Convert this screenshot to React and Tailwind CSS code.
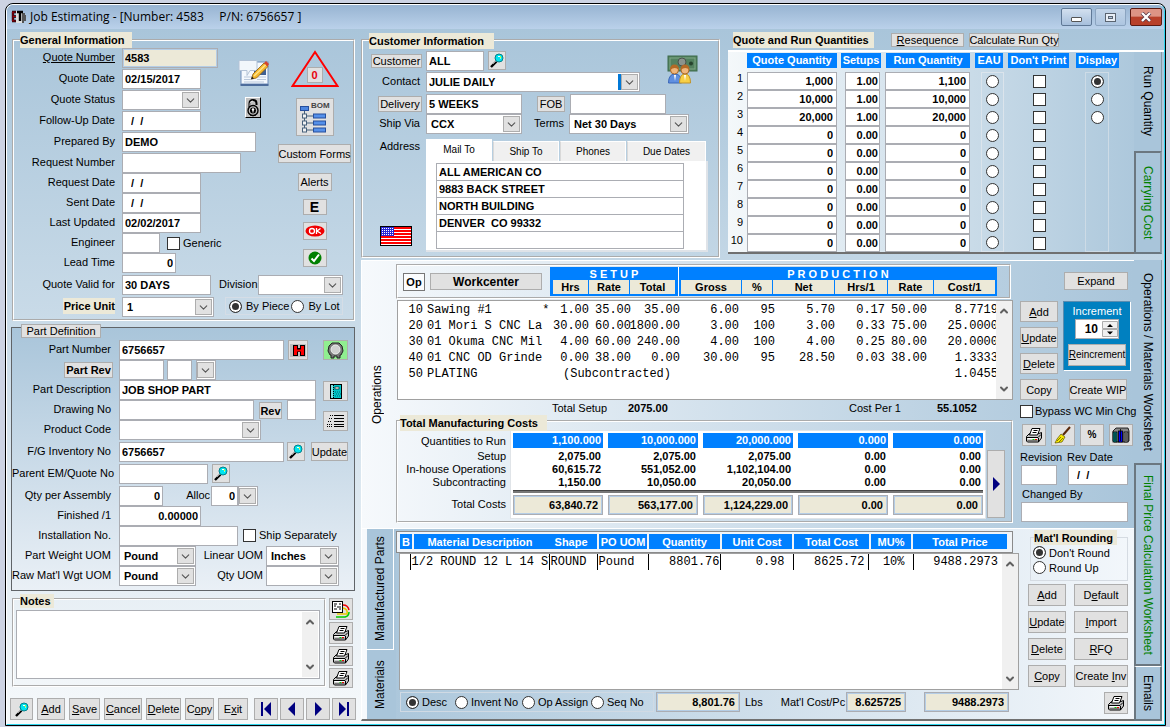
import { ChevronDown, ChevronUp } from 'lucide-react';

const quantityRows = [
    ['1,000', '1.00', '1,100'],
    ['10,000', '1.00', '10,000'],
    ['20,000', '1.00', '20,000'],
    ['0', '0.00', '0'],
    ['0', '0.00', '0'],
    ['0', '0.00', '0'],
    ['0', '0.00', '0'],
    ['0', '0.00', '0'],
    ['0', '0.00', '0'],
    ['0', '0.00', '0'],
];

const operations = [
    { op: 10, name: 'Sawing #1       *', hrs: '1.00', rate: '35.00', total: '35.00', gross: '6.00', pct: '95', net: '5.70', per: '0.17', prate: '50.00', cost: '8.7719' },
    { op: 20, name: '01 Mori S CNC La', hrs: '30.00', rate: '60.00', total: '1800.00', gross: '3.00', pct: '100', net: '3.00', per: '0.33', prate: '75.00', cost: '25.0000' },
    { op: 30, name: '01 Okuma CNC Mil', hrs: '4.00', rate: '60.00', total: '240.00', gross: '4.00', pct: '100', net: '4.00', per: '0.25', prate: '80.00', cost: '20.0000' },
    { op: 40, name: '01 CNC OD Grinde', hrs: '0.00', rate: '38.00', total: '0.00', gross: '30.00', pct: '95', net: '28.50', per: '0.03', prate: '38.00', cost: '1.3333' },
    { op: 50, name: 'PLATING', sub: '(Subcontracted)', cost: '1.0455' },
];

const costs = [
    { qty: '1,100.000', rows: ['2,075.00', '60,615.72', '1,150.00'], total: '63,840.72' },
    { qty: '10,000.000', rows: ['2,075.00', '551,052.00', '10,050.00'], total: '563,177.00' },
    { qty: '20,000.000', rows: ['2,075.00', '1,102,104.00', '20,050.00'], total: '1,124,229.00' },
    { qty: '0.000', rows: ['0.00', '0.00', '0.00'], total: '0.00' },
    { qty: '0.000', rows: ['0.00', '0.00', '0.00'], total: '0.00' },
];

// read-only totals: beige with a thin blue inner edge
const locked = 'bg-[#ece9d8] shadow-[inset_0_0_0_1px_#b4cde6]';

/* ---------- controls ---------- */

function Btn({ className = '', children, ...rest }) {
    return (
        <button
            type="button"
            className={`flex shrink-0 items-center justify-center whitespace-nowrap border border-[#adadad] bg-[#e1e1e1] ${className}`}
            {...rest}
        >
            {children}
        </button>
    );
}

function Field({ className = '', tone = 'bg-white', ...rest }) {
    return <input className={`h-5 shrink-0 border border-[#abadb3] px-[2px] font-bold outline-none ${tone} ${className}`} {...rest} />;
}

function Drop({ className = '', value = '', pad = 'pl-1', ...rest }) {
    return (
        <span className={`relative flex h-5 shrink-0 ${className}`}>
            <select className={`h-full w-full appearance-none border border-[#abadb3] bg-white font-bold outline-none ${pad}`} {...rest}>
                <option>{value}</option>
            </select>
            <span className="pointer-events-none absolute top-[2px] right-[2px] flex h-4 w-[17px] items-center justify-center border border-[#adadad] bg-[#e1e1e1]">
                <ChevronDown size={13} strokeWidth={2} color="#555" className="shrink-0" />
            </span>
        </span>
    );
}

function Radio(props) {
    return (
        <input
            type="radio"
            className="size-[13px] shrink-0 appearance-none rounded-full border border-[#333] bg-white checked:bg-[#333] checked:shadow-[inset_0_0_0_2px_#fff]"
            {...props}
        />
    );
}

function Check(props) {
    return <input type="checkbox" className="size-[13px] shrink-0 appearance-none border border-[#333] bg-white checked:bg-[#333]" {...props} />;
}

function Title({ className = '', children }) {
    return <h2 className={`whitespace-nowrap bg-[#ece9d8] leading-4 font-bold ${className}`}>{children}</h2>;
}

function Row({ label, id, h = 'h-5', col = 'mr-[7px] w-[101px]', children }) {
    return (
        <div className={`flex shrink-0 items-start ${h}`}>
            <label htmlFor={id} className={`shrink-0 text-right leading-[18px] whitespace-nowrap ${col}`}>{label}</label>
            {children}
        </div>
    );
}

function ScrollBar() {
    return (
        <div className="flex w-4 shrink-0 flex-col items-center justify-between bg-[#f0f0f0] py-1">
            <ChevronUp size={12} strokeWidth={4} color="#606060" />
            <ChevronDown size={12} strokeWidth={4} color="#606060" />
        </div>
    );
}

function SideTab({ className = '', children }) {
    return (
        <button type="button" className={`flex w-7 items-center justify-center text-[12px] [writing-mode:vertical-rl] ${className}`}>
            {children}
        </button>
    );
}

/* ---------- icons ---------- */

function Magnifier() {
    return (
        <svg width="14" height="15" viewBox="0 0 14 15">
            <path d="M1 14 L6.500 8.500" stroke="#000" strokeWidth="2.400" />
            <path d="M3 11 L6 8" stroke="#999" strokeWidth="1" />
            <circle cx="9" cy="5" r="4" fill="#00e5ee" stroke="#067f8c" />
            <path d="M8 3.500h2M10.500 4v1.500" stroke="#fff" />
            <path d="M10.500 3.500v1.500" stroke="#ff0" />
        </svg>
    );
}

function Printer() {
    return (
        <svg width="18" height="17" viewBox="0 0 18 17">
            <path d="M1.500 9.500L4.500 6.500H14L16.500 5.500V11L13.500 15H2.500L1.500 14Z" fill="#c8c8c8" stroke="#000" />
            <path d="M4.500 8L7 1.500H15L12.500 8Z" fill="#fff" stroke="#000" />
            <path d="M8.500 3.500h4M7.500 5.500h4" stroke="#000" />
            <path d="M1.500 10.500H13L16 7.500M13.500 11V15" stroke="#000" fill="none" />
            <path d="M2.500 11.500h10" stroke="#fff" />
            <path d="M2.500 13.500h10" stroke="#777" />
            <path d="M7.500 12.500h2" stroke="#0c0" />
            <path d="M10 12.500h2" stroke="#e00" />
        </svg>
    );
}

function AppIcon() {
    return (
        <svg width="15" height="14" viewBox="0 0 15 14">
            <path d="M11 3h3v2h1v6h-2v2h-2z" fill="#555" />
            <rect x="5" y="1" width="6" height="12" fill="#ddd" />
            <path d="M1 2h4M2 2v9M1 11h4M2 6.500h3M6 2h6M9 2v9" stroke="#000" strokeWidth="2.400" fill="none" />
            <path d="M1 2h4M2 2v9M1 11h4M2 6.500h3" stroke="#a00010" strokeWidth="1.200" fill="none" />
        </svg>
    );
}

function MemoIcon() {
    return (
        <svg width="31" height="28" viewBox="0 0 31 28">
            <rect x="3" y="3" width="27" height="22" fill="#f4f8fd" stroke="#6f8cb8" />
            <path d="M2.500 26h28" stroke="#4d6c9c" strokeWidth="2" />
            <rect x="16" y="10" width="12" height="6" fill="#3f5f92" />
            <path d="M6 18h8M6 20.500h7M6 23h20M20 18h8M19 20.500h9" stroke="#b9c7db" />
            <path d="M2 1.500h16q1 0 1 1v8q0 1-1 1h-6l-3 5v-5H2q-1 0-1-1v-8q0-1 1-1z" fill="#f2f6fb" stroke="#b3c2d6" />
            <path d="M13.500 20l1.500-5L26 4l4 3.500L18.500 19z" fill="#f5b92e" stroke="#8a5a10" strokeWidth=".8" />
            <path d="M16 17L28 5.500" stroke="#ffe48a" strokeWidth="1.400" />
            <path d="M26 4l2-2 3 3-1.500 2.500z" fill="#d6452c" />
            <path d="M13 20.500l1-3 2 2z" fill="#222" />
        </svg>
    );
}

function LockIcon() {
    return (
        <svg width="14" height="19" viewBox="0 0 14 19">
            <path d="M3.500 9V5.500Q3.500 2 7 2T10.500 5.500V7" stroke="#000" strokeWidth="2" fill="none" />
            <path d="M4 8V5.500Q4 3 7 3" stroke="#fff" strokeWidth=".8" fill="none" />
            <circle cx="7" cy="12.500" r="5" fill="#c0c0c0" stroke="#000" strokeWidth="1.400" />
            <circle cx="7" cy="12.500" r="3" fill="#000" />
            <circle cx="7" cy="11.500" r="1.200" fill="#fff" />
            <path d="M7 12v2.500" stroke="#fff" />
            <path d="M4 17q3 1.500 6 0" stroke="#000" fill="none" />
        </svg>
    );
}

function BomIcon() {
    return (
        <svg width="34" height="35" viewBox="0 0 34 35">
            <text x="13" y="8" fontSize="8" fontWeight="bold" fill="#444" fontFamily="Liberation Sans, sans-serif">BOM</text>
            <rect x="2.500" y="6.500" width="8" height="4" fill="#4d86e0" stroke="#274f9c" />
            <path d="M6.500 11V30M7 16h9M7 23h9M7 30h9" stroke="#47607a" />
            {[16, 23, 30].map((y) => (
                <g key={y}>
                    <rect x="4.500" y={y - 2} width="4" height="4" fill="#f2f2f2" stroke="#47607a" />
                    <rect x="15.500" y={y - 2} width="12" height="4" fill="#5590ea" stroke="#274f9c" />
                </g>
            ))}
        </svg>
    );
}

function CustomerIcon() {
    return (
        <svg width="31" height="30" viewBox="0 0 31 30">
            <rect x="1" y="1" width="29" height="15" fill="#53815f" stroke="#3d6b4a" />
            <rect x="3" y="3" width="25" height="11" fill="none" stroke="#7fa786" />
            <circle cx="15" cy="7" r="4" fill="#8b938c" stroke="#4a524c" />
            <circle cx="24" cy="8.500" r="2" fill="#27442e" />
            <path d="M1.500 28q0-9 6.500-9t6.500 9z" fill="#5f8fe0" stroke="#3a66b8" />
            <path d="M12.500 28q0-9 5.500-9t5.500 9z" fill="#f7cf45" stroke="#c0922a" />
            <circle cx="7.500" cy="15" r="4" fill="#f0b67c" stroke="#a96a2c" />
            <circle cx="18" cy="15" r="4" fill="#f0b67c" stroke="#a96a2c" />
            <path d="M3 15q0-5.500 4.500-5.500t4.500 5.500q-4-4-9 0zM13.500 15q0-5.500 4.500-5.500t4.500 5.500q-4-4-9 0z" fill="#b46a26" />
            <path d="M7 20l1 6 1-6zM17 20l1 6 1-6z" fill="#fff" />
        </svg>
    );
}

function FlagIcon() {
    return (
        <svg width="32" height="20" viewBox="0 0 32 20">
            <rect width="32" height="20" fill="#fff" />
            {[1, 4, 7, 10, 13, 16].map((y) => (
                <rect key={y} x="1" y={y} width="30" height="2" fill="#f00" />
            ))}
            <rect x="1" y="1" width="13" height="9" fill="#2a2ad8" />
            {[2, 4, 6, 8].map((y) => (
                <path key={y} d={`M2 ${y}.5h12`} stroke="#fff" strokeDasharray="1 1" />
            ))}
            <rect x=".5" y=".5" width="31" height="19" fill="none" stroke="#000" />
        </svg>
    );
}

function NavArrow({ dir, bar }) {
    return (
        <svg width="12" height="14" viewBox="0 0 12 14" fill="#000080" className={dir === 'left' ? '-scale-x-100' : ''}>
            <path d={bar ? 'M1 0v14l7-7z' : 'M3 0v14l7-7z'} />
            {bar && <rect x="9" width="2" height="14" />}
        </svg>
    );
}

/* ---------- left column ---------- */

function GeneralInformation() {
    return (
        <section className="mt-[10px] ml-[5px] border-2 border-white [border-style:groove]">
            <Title className="-mt-[9px] ml-[6px] w-28">General Information</Title>
            <div className="flex">
                <div className="w-[216px] shrink-0">
                    <Row label={<span className="underline">Quote Number</span>} id="quoteNo" h="h-[21px]"><Field id="quoteNo" className="w-24" tone={locked} defaultValue="4583" /></Row>
                    <Row label="Quote Date" id="quoteDate" h="h-[21px]"><Field id="quoteDate" className="w-[79px]" defaultValue="02/15/2017" /></Row>
                    <Row label="Quote Status" id="status" h="h-[21px]"><Drop id="status" className="w-[79px]" /></Row>
                    <Row label="Follow-Up Date" id="followUp" h="h-[21px]"><Field id="followUp" className="w-[79px] pl-2" defaultValue="/  /" /></Row>
                    <Row label="Prepared By" id="prepared" h="h-[21px]"><Field id="prepared" className="w-[134px]" defaultValue="DEMO" /></Row>
                    <Row label="Request Number" id="reqNo"><Field id="reqNo" className="w-[119px]" /></Row>
                    <Row label="Request Date" id="reqDate"><Field id="reqDate" className="w-[79px] pl-2" defaultValue="/  /" /></Row>
                    <Row label="Sent Date" id="sentDate"><Field id="sentDate" className="w-[79px] pl-2" defaultValue="/  /" /></Row>
                    <Row label="Last Updated" id="updated"><Field id="updated" className="w-[79px]" defaultValue="02/02/2017" /></Row>
                    <Row label="Engineer" id="engineer">
                        <Field id="engineer" className="w-[38px]" />
                        <label className="ml-[7px] flex h-5 items-center gap-[3px]"><Check />Generic</label>
                    </Row>
                    <Row label="Lead Time" id="lead" h="h-[22px]"><Field id="lead" className="w-[54px] text-right" defaultValue="0" /></Row>
                </div>
                <div className="flex w-[46px] shrink-0 flex-col items-center gap-[10px] pt-[11px]">
                    <button type="button" aria-label="Memo"><MemoIcon /></button>
                    <button type="button" aria-label="Lock" className="flex h-[21px] w-4 items-center justify-center border border-white border-r-black border-b-black bg-[#c0c0c0]"><LockIcon /></button>
                </div>
                <div className="flex flex-1 flex-col items-center pt-[2px]">
                    <div className="relative">
                        <svg width="48" height="38" viewBox="0 0 48 38" className="block"><path d="M24 2L46.500 36H1.500Z" fill="none" stroke="#f00" strokeWidth="2" /></svg>
                        <Btn className="absolute top-[17px] left-4 h-4 w-4 font-bold text-red-600">0</Btn>
                    </div>
                    <Btn className="mt-[10px] h-[38px] w-[38px]" aria-label="BOM"><BomIcon /></Btn>
                    <Btn className="mt-2 h-[19px] w-[73px]">Custom Forms</Btn>
                    <Btn className="mt-[10px] h-[18px] w-[34px]">Alerts</Btn>
                    <Btn className="mt-2 h-4 w-6 text-[14px] font-bold">E</Btn>
                    <Btn className="mt-[7px] h-[18px] w-6" aria-label="OK">
                        <svg width="20" height="12" viewBox="0 0 20 12">
                            <ellipse cx="10" cy="6" rx="9.500" ry="5.500" fill="#f00000" />
                            <ellipse cx="7" cy="6" rx="2.500" ry="2.500" fill="none" stroke="#fff" strokeWidth="1.300" />
                            <path d="M11.500 3v6M15.500 3.500L12 6l4 2.500" stroke="#fff" strokeWidth="1.300" fill="none" />
                        </svg>
                    </Btn>
                    <Btn className="mt-[9px] h-[18px] w-6" aria-label="Approve">
                        <svg width="14" height="14" viewBox="0 0 14 14">
                            <circle cx="7" cy="7" r="6.500" fill="#008000" />
                            <path d="M3.500 7.500L6 10l5-6.500" stroke="#fff" strokeWidth="2" fill="none" />
                        </svg>
                    </Btn>
                </div>
            </div>
            <Row label="Quote Valid for" id="valid" h="h-[22px]">
                <Field id="valid" className="w-[89px]" defaultValue="30 DAYS" />
                <label htmlFor="division" className="ml-2 leading-[18px]">Division</label>
                <Drop id="division" className="mr-[10px] ml-auto w-[85px]" />
            </Row>
            <Row label={<span className="bg-[#ece9d8] py-[2px] pl-px font-bold">Price Unit</span>} id="priceUnit" h="h-[22px]">
                <Drop id="priceUnit" className="w-[92px]" value="1" />
                <div className="mr-[10px] ml-auto flex h-[18px] w-[118px] items-center border border-[#d5dde6] pl-[3px]">
                    <label className="flex items-center gap-1"><Radio name="by" defaultChecked />By Piece</label>
                    <label className="ml-[2px] flex items-center gap-1"><Radio name="by" />By Lot</label>
                </div>
            </Row>
        </section>
    );
}

function PartDefinition() {
    const col = 'mr-2 w-[99px]';
    return (
        <section className="mt-[6px] ml-1 border border-[#606468] bg-linear-to-b from-[#a9c5da] to-[#eaf0f6] pb-1">
            <h2 className="-mt-1 mb-[2px] ml-[9px] flex h-[14px] w-20 items-center justify-center border border-[#adadad] bg-[#e1e1e1]">Part Definition</h2>
            <div className="flex justify-between pr-[6px]">
                <div>
                    <Row label="Part Number" id="partNo" col={col}>
                        <Field id="partNo" className="w-[165px]" defaultValue="6756657" />
                        <Btn className="ml-1 h-5 w-5" aria-label="History">
                            <svg width="16" height="13" viewBox="0 0 16 13">
                                <rect width="16" height="13" fill="#c0c0c0" />
                                <path d="M3 1h5v3h2V1h5v11h-5V8H8v4H3z" fill="#000" />
                                <path d="M4 2h3v3.500h4V2h3v9h-3V7.500H7V11H4z" fill="#f00" />
                            </svg>
                        </Btn>
                    </Row>
                    <div className="flex h-5">
                        <Btn className="mr-[6px] ml-[52px] mt-[2px] h-4 w-[49px] font-bold">Part Rev</Btn>
                        <Field className="w-[45px]" aria-label="Part rev" />
                        <Field className="ml-[3px] w-[25px]" aria-label="Part rev suffix" />
                        <Drop className="ml-1 w-[20px]" aria-label="Part rev list" />
                    </div>
                    <Row label="Part Description" id="desc" col={col}><Field id="desc" className="w-[197px]" defaultValue="JOB SHOP PART" /></Row>
                    <Row label="Drawing No" id="drawing" col={col}>
                        <Field id="drawing" className="w-[135px]" />
                        <Btn className="mt-[2px] ml-[5px] h-[17px] w-[23px] font-bold">Rev</Btn>
                        <Field className="ml-[5px] w-[29px]" aria-label="Drawing rev" />
                    </Row>
                    <Row label="Product Code" id="product" h="h-[22px]" col={col}><Drop id="product" className="w-[142px]" /></Row>
                </div>
                <div className="flex flex-col">
                    <Btn className="h-5 w-[25px] !bg-[#90ee90]" aria-label="Hardware">
                        <svg width="17" height="17" viewBox="0 0 17 17">
                            <path d="M5 1h7l3 3 1 5-2 4h-1v3h-3v-2H7v2H4v-3H3L1 9l1-5z" fill="#777" stroke="#222" />
                            <circle cx="8.500" cy="7.500" r="4.500" fill="#d0d0d0" stroke="#eee" />
                        </svg>
                    </Btn>
                    <Btn className="mt-[21px] h-5 w-[25px]" aria-label="Catalog">
                        <svg width="12" height="15" viewBox="0 0 12 15">
                            <rect x=".5" y=".5" width="11" height="14" fill="#00c8c8" stroke="#000" />
                            <path d="M2 1v13" stroke="#fff" />
                            <path d="M3.500 1v13" stroke="#000" strokeDasharray="1 1" />
                            <rect x="5" y="3" width="4" height="2" fill="#fff" stroke="#000" strokeWidth=".6" />
                            <path d="M5 8h5M6 10h5M5 12h5" stroke="#067" strokeDasharray="1 1" />
                        </svg>
                    </Btn>
                    <Btn className="mt-[10px] h-5 w-[25px]" aria-label="Details">
                        <svg width="18" height="14" viewBox="0 0 18 14" stroke="#000">
                            <path d="M7 1.500h10M7 4.500h10M7 7.500h10M7 10.500h10M7 12.500h10" />
                            <path d="M3 1.500h3M2 4.500h4M1 7.500h4M0 10.500h5M0 12.500h5" strokeDasharray="1 1" />
                        </svg>
                    </Btn>
                </div>
            </div>
            <Row label="F/G Inventory No" id="fg" h="h-[22px]" col={col}>
                <Field id="fg" className="w-[165px]" defaultValue="6756657" />
                <Btn className="ml-[3px] h-[19px] w-[18px]" aria-label="Find inventory"><Magnifier /></Btn>
                <Btn className="mr-[6px] ml-auto h-[19px] w-[37px]">Update</Btn>
            </Row>
            <Row label="Parent EM/Quote No" id="parent" h="h-[22px]" col={col}>
                <Field id="parent" className="w-[89px]" />
                <Btn className="ml-1 h-[19px] w-[18px]" aria-label="Find parent"><Magnifier /></Btn>
            </Row>
            <Row label="Qty per Assembly" id="qtyPer" col={col}>
                <Field id="qtyPer" className="w-11 text-right" defaultValue="0" />
                <label htmlFor="alloc" className="w-12 pr-px text-right leading-[18px]">Alloc</label>
                <Field className="w-[27px] text-right" aria-label="Alloc quantity" defaultValue="0" />
                <Drop id="alloc" className="w-5" />
            </Row>
            <Row label="Finished /1" id="finished" col={col}><Field id="finished" className="w-[82px] text-right" defaultValue="0.00000" /></Row>
            <Row label="Installation No." id="install" col={col}>
                <Field id="install" className="w-[119px]" />
                <label className="ml-[5px] flex h-[18px] items-center gap-[3px]"><Check />Ship Separately</label>
            </Row>
            <Row label="Part Weight UOM" id="wUom" col={col}>
                <Drop id="wUom" className="w-[77px]" value="Pound" />
                <label htmlFor="lUom" className="ml-[7px] w-[60px] text-right leading-[18px] whitespace-nowrap">Linear UOM</label>
                <Drop id="lUom" className="ml-[3px] w-[73px]" value="Inches" />
            </Row>
            <Row label="Raw Mat'l Wgt UOM" id="rUom" col={col}>
                <Drop id="rUom" className="w-[77px]" value="Pound" />
                <label htmlFor="qUom" className="ml-[7px] w-[60px] text-right leading-[18px] whitespace-nowrap">Qty UOM</label>
                <Drop id="qUom" className="ml-[3px] w-[73px]" />
            </Row>
        </section>
    );
}

function Notes() {
    return (
        <div className="mt-[7px] ml-[5px] flex items-start">
            <section className="flex-1 border-2 border-white pb-[6px] [border-style:groove]">
                <Title className="-mt-[6px] mb-[2px] ml-[6px] w-[34px] !leading-[14px]">Notes</Title>
                <div className="mr-[4px] ml-[2px] flex h-[69px] border border-[#abadb3] bg-white p-px">
                    <textarea aria-label="Notes" className="min-w-0 flex-1 resize-none outline-none" />
                    <ScrollBar />
                </div>
            </section>
            <div className="mr-[2px] ml-[3px] flex flex-col gap-[2px]">
                <Btn className="h-[22px] w-6" aria-label="Attach note">
                    <svg width="20" height="19" viewBox="0 0 20 19">
                        <rect x="1.500" y="1.500" width="10" height="11" fill="#fff" stroke="#000" />
                        <path d="M3 4h3M8 4h2M3 6h2M6 7h4M3 9h3M8 9h2" stroke="#000" />
                        <path d="M12 5q5 0 6 5" stroke="#e00" strokeWidth="1.500" fill="none" />
                        <path d="M12 8q5 1 4 6l-10 0" stroke="#e8c800" strokeWidth="1.500" fill="none" />
                        <path d="M5 17h9q4-1 4-5" stroke="#0c0" strokeWidth="1.500" fill="none" />
                    </svg>
                </Btn>
                <Btn className="h-[22px] w-6" aria-label="Print note"><Printer /></Btn>
                <Btn className="h-5 w-6" aria-label="Print quote"><Printer /></Btn>
                <Btn className="h-5 w-6" aria-label="Print job"><Printer /></Btn>
            </div>
        </div>
    );
}

function Toolbar() {
    return (
        <div className="mt-[10px] ml-[3px] flex gap-1">
            <Btn className="h-[22px] w-[23px]" aria-label="Find"><Magnifier /></Btn>
            <Btn className="h-[22px] w-7"><span><u>A</u>dd</span></Btn>
            <Btn className="h-[22px] w-[31px]"><span><u>S</u>ave</span></Btn>
            <Btn className="h-[22px] w-[38px]"><span><u>C</u>ancel</span></Btn>
            <Btn className="h-[22px] w-[35px]"><span><u>D</u>elete</span></Btn>
            <Btn className="h-[22px] w-[29px]"><span>C<u>o</u>py</span></Btn>
            <Btn className="h-[22px] w-[30px]"><span>E<u>x</u>it</span></Btn>
            <div className="ml-[2px] flex gap-[2px]">
                <Btn className="h-[22px] w-6" aria-label="First"><NavArrow dir="left" bar /></Btn>
                <Btn className="h-[22px] w-6" aria-label="Previous"><NavArrow dir="left" /></Btn>
                <Btn className="h-[22px] w-6" aria-label="Next"><NavArrow dir="right" /></Btn>
                <Btn className="h-[22px] w-6" aria-label="Last"><NavArrow dir="right" bar /></Btn>
            </div>
        </div>
    );
}

/* ---------- top right ---------- */

function CustomerInformation() {
    const col = 'mr-[6px] w-[57px]';
    const tabs = [['Ship To', 'w-[66px]'], ['Phones', 'w-[66px]'], ['Due Dates', 'w-[79px]']];
    const address = ['ALL AMERICAN CO', '9883 BACK STREET', 'NORTH BUILDING', 'DENVER  CO 99332', ''];
    return (
        <section className="mt-[10px] flex-1 border-2 border-white pb-1 [border-style:groove]">
            <Title className="-mt-2 mb-[2px] ml-[6px] w-[125px]">Customer Information</Title>
            <div className="flex justify-between pr-5">
                <div>
                    <div className="flex h-[21px]">
                        <Btn className="mt-[3px] mr-1 ml-2 h-[14px] w-[51px]">Customer</Btn>
                        <Field className="w-[58px]" aria-label="Customer" defaultValue="ALL" />
                        <Btn className="ml-1 h-[19px] w-[18px]" aria-label="Find customer"><Magnifier /></Btn>
                    </div>
                    <Row label="Contact" id="contact" h="h-[22px]" col={col}>
                        <span className="relative flex">
                            <Drop id="contact" className="w-[214px]" pad="pl-[2px]" value="JULIE DAILY" />
                            <span className="pointer-events-none absolute top-[2px] right-[19px] h-4 w-[3px] bg-[#0078d7]" />
                        </span>
                    </Row>
                </div>
                <div className="pt-1"><CustomerIcon /></div>
            </div>
            <div className="flex h-5">
                <Btn className="mt-[2px] mr-1 ml-[15px] h-4 w-[44px]">Delivery</Btn>
                <Field className="w-24" aria-label="Delivery" defaultValue="5 WEEKS" />
                <Btn className="mt-[2px] mr-[5px] ml-[15px] h-4 w-7">FOB</Btn>
                <Field className="w-24" aria-label="FOB" />
            </div>
            <Row label="Ship Via" id="shipVia" col={col}>
                <Drop id="shipVia" className="w-24" value="CCX" />
                <label htmlFor="terms" className="mr-[5px] w-[42px] text-right leading-[18px]">Terms</label>
                <Drop id="terms" className="w-[120px]" value="Net 30 Days" />
            </Row>
            <div className="mt-[5px] flex">
                <div className="mr-[6px] flex w-[57px] shrink-0 flex-col items-end justify-between pb-[6px]">
                    <span>Address</span>
                    <span className="mr-2"><FlagIcon /></span>
                </div>
                <div className="mr-[10px] flex-1">
                    <div className="flex h-[22px] items-end text-[10px]">
                        <button type="button" className="h-[22px] w-[66px] bg-white">Mail To</button>
                        {tabs.map(([name, w]) => (
                            <button key={name} type="button" className={`ml-px h-5 border border-b-0 border-white border-l-[#d9d9d9] bg-[#f0f0f0] ${w}`}>{name}</button>
                        ))}
                    </div>
                    <div className="border-r-2 border-b-2 border-[#dfe3e8] bg-white pt-[2px] pb-px pr-[22px] pl-[10px]">
                        <div className="border border-b-0 border-[#abadb3]">
                            {address.map((line, i) => (
                                <input key={i} aria-label={`Address line ${i + 1}`} className="block h-[17px] w-full border-b border-[#abadb3] px-[2px] font-bold outline-none" defaultValue={line} />
                            ))}
                        </div>
                    </div>
                </div>
            </div>
        </section>
    );
}

function Quantities() {
    const head = 'block h-[15px] bg-[#0080ff] text-center leading-[15px] text-white';
    const cell = 'block h-[18px] border border-[#abadb3] bg-white text-right font-bold outline-none';
    return (
        <section className="ml-2 w-[436px] shrink-0 pt-[3px]">
            <div className="flex items-start pl-[5px]">
                <Title className="w-[141px]">Quote and Run Quantities</Title>
                <Btn className="mt-px ml-[17px] h-[14px] w-[73px]"><span><u>R</u>esequence</span></Btn>
                <Btn className="mt-px ml-[5px] h-[14px] w-[90px]">Calculate Run Qty</Btn>
            </div>
            <div className="mt-[2px] flex border-t-2 border-white">
                <div className="flex-1 border-b-2 border-b-[#707070] bg-linear-to-r from-[#f4f8fa] to-[#adc8dc]">
                    <table className="w-[392px] table-fixed border-collapse">
                        <colgroup>
                            <col className="w-[19px]" /><col className="w-[94px]" /><col className="w-[44px]" /><col className="w-[89px]" />
                            <col className="w-[34px]" /><col className="w-[68px]" /><col className="w-[44px]" />
                        </colgroup>
                        <thead>
                            <tr className="h-5 align-top">
                                <th />
                                <th className="pt-px"><span className={`${head} w-[90px]`}>Quote Quantity</span></th>
                                <th className="pt-px"><span className={`${head} w-10`}>Setups</span></th>
                                <th className="pt-px"><span className={`${head} ml-px w-[84px]`}>Run Quantity</span></th>
                                <th className="pt-px"><span className={`${head} ml-px w-7`}>EAU</span></th>
                                <th className="pt-px"><span className={`${head} w-[61px] whitespace-nowrap`}>Don't Print</span></th>
                                <th className="pt-px"><span className={`${head} w-[43px]`}>Display</span></th>
                            </tr>
                        </thead>
                        <tbody>
                            {quantityRows.map(([qty, setups, run], i) => (
                                <tr key={i} className="h-[18px]">
                                    <td className="pr-1 text-right align-top leading-[13px] whitespace-nowrap">{i + 1}</td>
                                    <td><input aria-label={`Quote quantity ${i + 1}`} className={`${cell} w-[90px] pr-[3px]`} defaultValue={qty} /></td>
                                    <td><input aria-label={`Setups ${i + 1}`} className={`${cell} ml-1 w-[35px] pr-px`} defaultValue={setups} /></td>
                                    <td><input aria-label={`Run quantity ${i + 1}`} className={`${cell} w-[85px] pr-[3px]`} defaultValue={run} /></td>
                                    <td>
                                        <span className={`ml-[7px] flex h-[18px] w-[23px] items-center justify-center border-x border-[#dbe4ec] ${i === 0 ? 'border-t' : ''} ${i === 9 ? 'border-b' : ''}`}>
                                            <Radio name="eau" aria-label={`EAU ${i + 1}`} />
                                        </span>
                                    </td>
                                    <td><span className="flex w-[62px] items-start justify-center"><Check aria-label={`Don't print ${i + 1}`} /></span></td>
                                    <td>
                                        <span className={`ml-[9px] flex h-[18px] w-6 items-center justify-center border-x border-[#cddbe6] ${i === 0 ? 'border-t' : ''} ${i === 9 ? 'border-b' : ''}`}>
                                            {i < 3 && <Radio name="display" aria-label={`Display ${i + 1}`} defaultChecked={i === 0} />}
                                        </span>
                                    </td>
                                </tr>
                            ))}
                        </tbody>
                    </table>
                </div>
                <div className="mr-[2px] flex flex-col bg-[#a9c5da]">
                    <SideTab className="flex-1 border-r border-[#8a98a4]">Run Quantity</SideTab>
                    <SideTab className="flex-1 border-2 border-[#6b7780] !border-r-[#8a98a4] text-[#008000]">Carrying Cost</SideTab>
                </div>
            </div>
        </section>
    );
}

/* ---------- operations and materials ---------- */

function OperationsHeader() {
    const cell = 'flex h-[14px] items-center justify-center bg-[#ece9d8]';
    return (
        <div className="mr-[2px] flex h-[35px] items-center border-2 border-white bg-linear-to-r from-[#f1f6fa]/50 to-[#b5cde0]/50 [border-style:groove]">
            <Btn className="ml-[5px] h-[18px] w-[22px] !border-[#777] !bg-white/70 font-bold">Op</Btn>
            <Btn className="ml-[5px] h-[17px] w-[112px] text-[12px] font-bold">Workcenter</Btn>
            <div className="ml-2 flex bg-[#0080ff] font-bold">
                <div className="px-[3px] pb-[2px]">
                    <div className="h-[13px] text-center leading-[14px] whitespace-pre text-white">S E T U P</div>
                    <div className="flex gap-px">
                        <span className={`${cell} w-[35px]`}>Hrs</span>
                        <span className={`${cell} w-10`}>Rate</span>
                        <span className={`${cell} w-[45px]`}>Total</span>
                    </div>
                </div>
                <div className="border-l border-white px-[2px] pb-[2px]">
                    <div className="h-[13px] text-center leading-[14px] whitespace-pre text-white">P R O D U C T I O N</div>
                    <div className="flex gap-px">
                        <span className={`${cell} w-[60px]`}>Gross</span>
                        <span className={`${cell} w-[30px]`}>%</span>
                        <span className={`${cell} w-[61px]`}>Net</span>
                        <span className={`${cell} w-[52px]`}>Hrs/1</span>
                        <span className={`${cell} w-[45px]`}>Rate</span>
                        <span className={`${cell} w-[61px]`}>Cost/1</span>
                    </div>
                </div>
            </div>
        </div>
    );
}

function OperationsList() {
    return (
        <div className="mt-px ml-px flex h-[100px] border border-[#a0a0a0] bg-white">
            <div className="w-0 flex-1 overflow-hidden pt-px font-['Liberation_Mono',monospace] text-[12px]">
                <table className="w-[600px] table-fixed border-collapse text-right whitespace-pre">
                    <colgroup>
                        <col className="w-[25px]" /><col className="w-[123px]" /><col className="w-[43px]" /><col className="w-[42px]" />
                        <col className="w-[49px]" /><col className="w-[59px]" /><col className="w-[36px]" /><col className="w-[60px]" />
                        <col className="w-[50px]" /><col className="w-[42px]" /><col className="w-[71px]" />
                    </colgroup>
                    <tbody>
                        {operations.map((o) => (
                            <tr key={o.op} className="h-4 leading-4">
                                <td>{o.op}</td>
                                <td className="pl-1 text-left">{o.name}</td>
                                {o.sub ? <td colSpan={3} className="pl-[17px] text-left">{o.sub}</td> : (
                                    <>
                                        <td>{o.hrs}</td>
                                        <td>{o.rate}</td>
                                        <td><span className="flex justify-end">{o.total}</span></td>
                                    </>
                                )}
                                <td>{o.gross}</td>
                                <td>{o.pct}</td>
                                <td>{o.net}</td>
                                <td>{o.per}</td>
                                <td>{o.prate}</td>
                                <td>{o.cost}</td>
                            </tr>
                        ))}
                    </tbody>
                </table>
            </div>
            <ScrollBar />
        </div>
    );
}

function ManufacturingCosts() {
    return (
        <section className="flex border-2 border-white pb-[2px] [border-style:groove]">
            <div className="w-[112px] shrink-0">
                <Title className="relative -mt-[7px] ml-[2px] w-[147px]">Total Manufacturing Costs</Title>
                <div className="mt-[2px] pr-1 text-right">
                    <div className="h-[17px] leading-4">Quantities to Run</div>
                    <div className="h-[13px] leading-[13px]">Setup</div>
                    <div className="h-[13px] leading-[13px]">In-house Operations</div>
                    <div className="h-[13px] leading-[13px]">Subcontracting</div>
                    <div className="mt-2 leading-[15px]">Total Costs</div>
                </div>
            </div>
            <div className="mt-[8px] flex h-[89px] gap-[5px] border border-[#e0e4e8] bg-white px-[2px] pt-[2px]">
                {costs.map((c, i) => (
                    <div key={i} className="w-[90px] text-right font-bold">
                        <div className="h-[15px] bg-[#0080ff] pr-[2px] leading-[15px] text-white">{c.qty}</div>
                        <div className="mt-[2px] pr-[2px] leading-[13px]">
                            {c.rows.map((v, j) => <div key={j}>{v}</div>)}
                        </div>
                        <div className={`mt-px h-[3px] border-t border-[#444] bg-[#777] ${i < 4 ? '-mr-[5px]' : ''}`} />
                        <Field className="mt-[2px] w-full pr-1 text-right" tone={locked} aria-label={`Total cost ${i + 1}`} defaultValue={c.total} readOnly />
                    </div>
                ))}
            </div>
            <Btn className="mt-7 ml-px h-[68px] w-[18px]" aria-label="More quantities">
                <NavArrow dir="right" />
            </Btn>
        </section>
    );
}

function OperationsSide() {
    return (
        <div className="relative w-[121px] shrink-0 pl-[7px]">
            <Btn className="mt-[11px] ml-11 h-[18px] w-16">Expand</Btn>
            <div className="mt-[11px] flex gap-[5px]">
                <div className="flex flex-col gap-[5px]">
                    <Btn className="h-[21px] w-[38px]"><span><u>A</u>dd</span></Btn>
                    <Btn className="h-[21px] w-[38px]"><span><u>U</u>pdate</span></Btn>
                    <Btn className="h-[21px] w-[38px]"><span><u>D</u>elete</span></Btn>
                    <Btn className="h-[21px] w-[38px]">Copy</Btn>
                </div>
                <div className="flex flex-col">
                    <div className="flex h-[70px] w-[68px] flex-col items-center border border-[#5b8db0] border-r-white border-b-white bg-[#0080c0] pt-[2px]">
                        <label htmlFor="increment" className="leading-[15px] text-white">Increment</label>
                        <div className="flex h-5 w-11 items-center border border-[#abadb3] bg-white">
                            <input id="increment" className="w-[22px] text-right text-[12px] font-bold outline-none" defaultValue="10" />
                            <svg width="16" height="16" viewBox="0 0 16 16" className="ml-1">
                                <path d="M.5 .5h15v7H.5zM.5 8.500h15v7H.5z" fill="#f0f0f0" stroke="#adadad" />
                                <path d="M5 6h6L8 3zM5 10.500h6l-3 3z" fill="#000" />
                            </svg>
                        </div>
                        <Btn className="mt-[5px] h-[22px] w-[58px] text-[10px]"><span><u>R</u>eincrement</span></Btn>
                    </div>
                    <Btn className="mt-auto ml-[6px] h-[21px] w-[58px]">Create WIP</Btn>
                </div>
            </div>
            <label className="mt-1 flex items-center gap-[2px] whitespace-nowrap"><Check />Bypass WC Min Chg</label>
            <div className="mt-[6px] flex gap-[5px] pl-[2px]">
                <Btn className="h-[22px] w-6" aria-label="Print"><Printer /></Btn>
                <Btn className="h-[22px] w-6" aria-label="Clear">
                    <svg width="18" height="18" viewBox="0 0 18 18">
                        <path d="M9 9l7-8" stroke="#5a2a0a" strokeWidth="2" />
                        <path d="M7 8l4 3-3 5-7 1 2-4z" fill="#f5e800" stroke="#5a5200" strokeWidth=".7" />
                        <path d="M3 15l4-4M5 16l4-4" stroke="#665c00" strokeWidth=".8" />
                    </svg>
                </Btn>
                <Btn className="h-[22px] w-6 text-[10px] font-bold">%</Btn>
                <Btn className="h-[22px] w-6" aria-label="Library">
                    <svg width="18" height="16" viewBox="0 0 18 16" stroke="#000" strokeWidth=".8">
                        <path d="M1 4l3-3h12l1 3v10l-2 1H2l-1-1z" fill="#888" />
                        <rect x="1" y="5" width="4" height="10" fill="#088" />
                        <rect x="6.500" y="4" width="4" height="11" fill="#00f" />
                        <rect x="12" y="5" width="4" height="10" fill="#999" />
                        <path d="M3 6v8M8.500 2v12M14 6v8" />
                    </svg>
                </Btn>
            </div>
            <div className="mt-1 flex leading-[15px]">
                <label htmlFor="revision" className="w-[47px]">Revision</label>
                <label htmlFor="revDate">Rev Date</label>
            </div>
            <div className="flex pl-px">
                <Field id="revision" className="w-9" />
                <Field id="revDate" className="ml-[11px] w-[60px] pl-2" defaultValue="/  /" />
            </div>
            <label htmlFor="changedBy" className="mt-[2px] block pl-[2px] leading-[15px]">Changed By</label>
            <Field id="changedBy" className="ml-px block w-[107px]" />
        </div>
    );
}

function Materials() {
    const head = 'flex h-[15px] shrink-0 items-center justify-center bg-[#0080ff] text-white';
    const cell = 'overflow-hidden border-l border-black';
    return (
        <div className="flex min-w-0 flex-1 flex-col">
            <div className="mt-[2px] mr-[6px] flex h-[22px] gap-[2px] border border-[#8a8a8a] bg-[#f0f4f8] px-[3px] pt-[2px] font-bold">
                <span className={`${head} w-3`}>B</span>
                <span className={`${head} w-[183px] gap-[22px] pl-1`}><span>Material Description</span><span>Shape</span></span>
                <span className={`${head} w-12`}>PO UOM</span>
                <span className={`${head} w-[71px]`}>Quantity</span>
                <span className={`${head} w-[70px]`}>Unit Cost</span>
                <span className={`${head} w-[75px]`}>Total Cost</span>
                <span className={`${head} w-10`}>MU%</span>
                <span className={`${head} w-[94px]`}>Total Price</span>
            </div>
            <div className="ml-[3px] flex h-[137px] border border-[#a0a0a0] bg-white">
                <div className="w-0 flex-1 overflow-hidden font-['Liberation_Mono',monospace] text-[12px]">
                    <table className="w-[600px] table-fixed border-collapse text-right leading-4 whitespace-pre">
                        <colgroup>
                            <col className="w-[10px]" /><col className="w-[139px]" /><col className="w-[48px]" /><col className="w-[51px]" />
                            <col className="w-[72px]" /><col className="w-[73px]" /><col className="w-[75px]" /><col className="w-[45px]" /><col className="w-[87px]" />
                        </colgroup>
                        <tbody>
                            <tr className="h-4">
                                <td />
                                <td className={`${cell} pl-px text-left`}>1/2 ROUND 12 L 14 ST</td>
                                <td className={`${cell} pl-px text-left`}>ROUND</td>
                                <td className={`${cell} pl-px text-left`}>Pound</td>
                                <td className={cell}>8801.76</td>
                                <td className={`${cell} pr-2`}>0.98</td>
                                <td className={`${cell} pr-[3px]`}>8625.72</td>
                                <td className={`${cell} pr-2`}>10%</td>
                                <td className={`${cell} pr-[2px]`}>9488.2973</td>
                            </tr>
                        </tbody>
                    </table>
                </div>
                <ScrollBar />
            </div>
            <div className="mt-[2px] ml-1 flex items-center">
                <div className="flex h-5 w-[254px] items-center border border-[#d0dae4] pl-[5px] whitespace-nowrap">
                    <label className="flex w-[49px] items-center gap-[3px]"><Radio name="sort" defaultChecked />Desc</label>
                    <label className="flex w-[67px] items-center gap-[3px]"><Radio name="sort" />Invent No</label>
                    <label className="flex w-[69px] items-center gap-[3px]"><Radio name="sort" />Op Assign</label>
                    <label className="flex items-center gap-[3px]"><Radio name="sort" />Seq No</label>
                </div>
                <Field id="lbs" className="ml-[2px] w-[84px] pr-1 text-right" tone={locked} defaultValue="8,801.76" readOnly />
                <label htmlFor="lbs" className="ml-[5px]">Lbs</label>
                <label htmlFor="costPc" className="ml-[18px] whitespace-nowrap">Mat'l Cost/Pc</label>
                <Field id="costPc" className="ml-px w-[60px] pr-1 text-right" tone={locked} defaultValue="8.625725" readOnly />
                <Field className="mr-[10px] ml-auto w-[85px] pr-1 text-right" tone={locked} aria-label="Material total" defaultValue="9488.2973" readOnly />
            </div>
        </div>
    );
}

function MaterialsSide() {
    const left = 'h-[22px] w-[38px]';
    const right = 'h-[22px] w-[54px]';
    return (
        <div className="w-[115px] shrink-0 pr-[6px] pl-[9px]">
            <section className="mt-2 ml-[2px] border border-[#d5dbe2] pb-[5px]">
                <Title className="-mt-2 ml-[3px] h-[15px] w-[83px]">Mat'l Rounding</Title>
                <label className="flex h-[15px] items-center gap-[3px] pl-[2px]"><Radio name="rounding" defaultChecked />Don't Round</label>
                <label className="flex h-[15px] items-center gap-[3px] pl-[2px]"><Radio name="rounding" />Round Up</label>
            </section>
            <div className="mt-[3px] grid grid-cols-[38px_54px] justify-between gap-y-[5px]">
                <Btn className={left}><span><u>A</u>dd</span></Btn>
                <Btn className={right}><span>D<u>e</u>fault</span></Btn>
                <Btn className={left}><span><u>U</u>pdate</span></Btn>
                <Btn className={right}><span><u>I</u>mport</span></Btn>
                <Btn className={left}><span><u>D</u>elete</span></Btn>
                <Btn className={right}><span><u>R</u>FQ</span></Btn>
                <Btn className={left}><span><u>C</u>opy</span></Btn>
                <Btn className={right}><span>Create <u>I</u>nv</span></Btn>
            </div>
            <Btn className="mt-[5px] ml-auto h-[22px] w-6" aria-label="Print materials"><Printer /></Btn>
        </div>
    );
}

function Worksheet() {
    return (
        <div className="mt-[2px] mr-[2px] flex flex-1">
            <div className="flex flex-1 flex-col border-t border-b-2 border-l border-white border-b-[#707070]">
                <div className="flex h-[267px] bg-linear-to-r from-[#f6f9fc] to-[#a9c5da]">
                    <SideTab className="ml-px rotate-180">Operations</SideTab>
                    <div className="ml-[5px] flex flex-1 flex-col pt-[3px]">
                        <OperationsHeader />
                        <OperationsList />
                        <div className="ml-[156px] flex h-5 items-start leading-[17px]">
                            <span className="w-[76px]">Total Setup</span>
                            <span className="w-[221px] font-bold">2075.00</span>
                            <span className="w-[88px]">Cost Per 1</span>
                            <span className="font-bold">55.1052</span>
                        </div>
                        <ManufacturingCosts />
                    </div>
                    <OperationsSide />
                </div>
                <div className="flex flex-1 border-t border-white bg-linear-to-r from-[#a9c5da] to-[#f3f7fb]">
                    <div className="flex w-[34px] shrink-0 flex-col bg-linear-to-r from-[#f6f9fc] from-15% to-[#a9c5da] to-15% pl-1">
                        <SideTab className="h-[121px] rotate-180 border-t border-l border-white">Manufactured Parts</SideTab>
                        <SideTab className="flex-1 rotate-180">Materials</SideTab>
                    </div>
                    <Materials />
                    <MaterialsSide />
                </div>
            </div>
            <div className="flex flex-col bg-[#a9c5da]">
                <SideTab className="h-[203px] border-r border-[#8a98a4]">Operations / Materials Worksheet</SideTab>
                <SideTab className="h-[203px] border-2 border-[#6b7780] text-[#008000]">Final Price Calculation Worksheet</SideTab>
                <SideTab className="flex-1 border-2 border-t border-[#6b7780] border-t-white">Emails</SideTab>
            </div>
        </div>
    );
}

export default function App() {
    return (
        <div className="flex min-h-screen flex-col bg-[#cdd3e3] pt-[3px] pr-1 pb-px pl-[5px] font-['Liberation_Sans',Arial,sans-serif] text-[11px] leading-[14px] text-black">
            <div className="flex flex-1 flex-col overflow-hidden rounded-t-lg border border-black bg-[#a9c5da]">
                <div className="flex flex-1 flex-col rounded-t-[7px] border border-white border-r-[#2fd5ee] border-b-[#2fd5ee]">
                    <header className="flex h-6 shrink-0 items-center rounded-t-[6px] bg-linear-to-b from-[#98b4d2] to-[#bad1ea] pr-[2px] pl-1">
                        <AppIcon />
                        <h1 className="ml-1 font-['Open_Sans',sans-serif] text-[12px] whitespace-pre">Job Estimating - [Number: 4583     P/N: 6756657 ]</h1>
                        <div className="ml-auto flex gap-[3px]">
                            <button type="button" aria-label="Minimize" className="flex h-[18px] w-[31px] items-center justify-center rounded-[2px] border border-[#5f7896] bg-linear-to-b from-[#d3e0ef] to-[#a6bfdc]">
                                <span className="mt-1 h-[5px] w-[11px] rounded-[1px] border border-[#555] bg-white" />
                            </button>
                            <button type="button" aria-label="Maximize" className="flex h-[18px] w-[31px] items-center justify-center rounded-[2px] border border-[#8ba4c0] bg-linear-to-b from-[#c3d5e9] to-[#adc5e0]">
                                <svg width="11" height="9" viewBox="0 0 11 9">
                                    <rect x=".5" y=".5" width="10" height="8" fill="#e8eef6" stroke="#5a6470" />
                                    <rect x="3.500" y="3.500" width="4" height="2" fill="#b8cbe2" stroke="#5a6470" />
                                </svg>
                            </button>
                            <button type="button" aria-label="Close" className="ml-px flex h-[18px] w-8 items-center justify-center rounded-[2px] border border-[#5c1a12] bg-linear-to-b from-[#dd9485] from-45% to-[#b8402a] to-50%">
                                <svg width="12" height="10" viewBox="0 0 12 10">
                                    <path d="M2 1l8 8M10 1L2 9" stroke="#534" strokeWidth="3.800" />
                                    <path d="M2 1l8 8M10 1L2 9" stroke="#fff" strokeWidth="2.400" />
                                </svg>
                            </button>
                        </div>
                    </header>
                    <main className="flex flex-1 bg-linear-to-b from-[#a9c5da] to-[#f6f9fb]">
                        <div className="mr-[6px] w-[348px] shrink-0">
                            <GeneralInformation />
                            <PartDefinition />
                            <Notes />
                            <Toolbar />
                        </div>
                        <div className="flex min-w-0 flex-1 flex-col pb-[3px]">
                            <div className="flex">
                                <CustomerInformation />
                                <Quantities />
                            </div>
                            <Worksheet />
                        </div>
                    </main>
                </div>
            </div>
        </div>
    );
}
